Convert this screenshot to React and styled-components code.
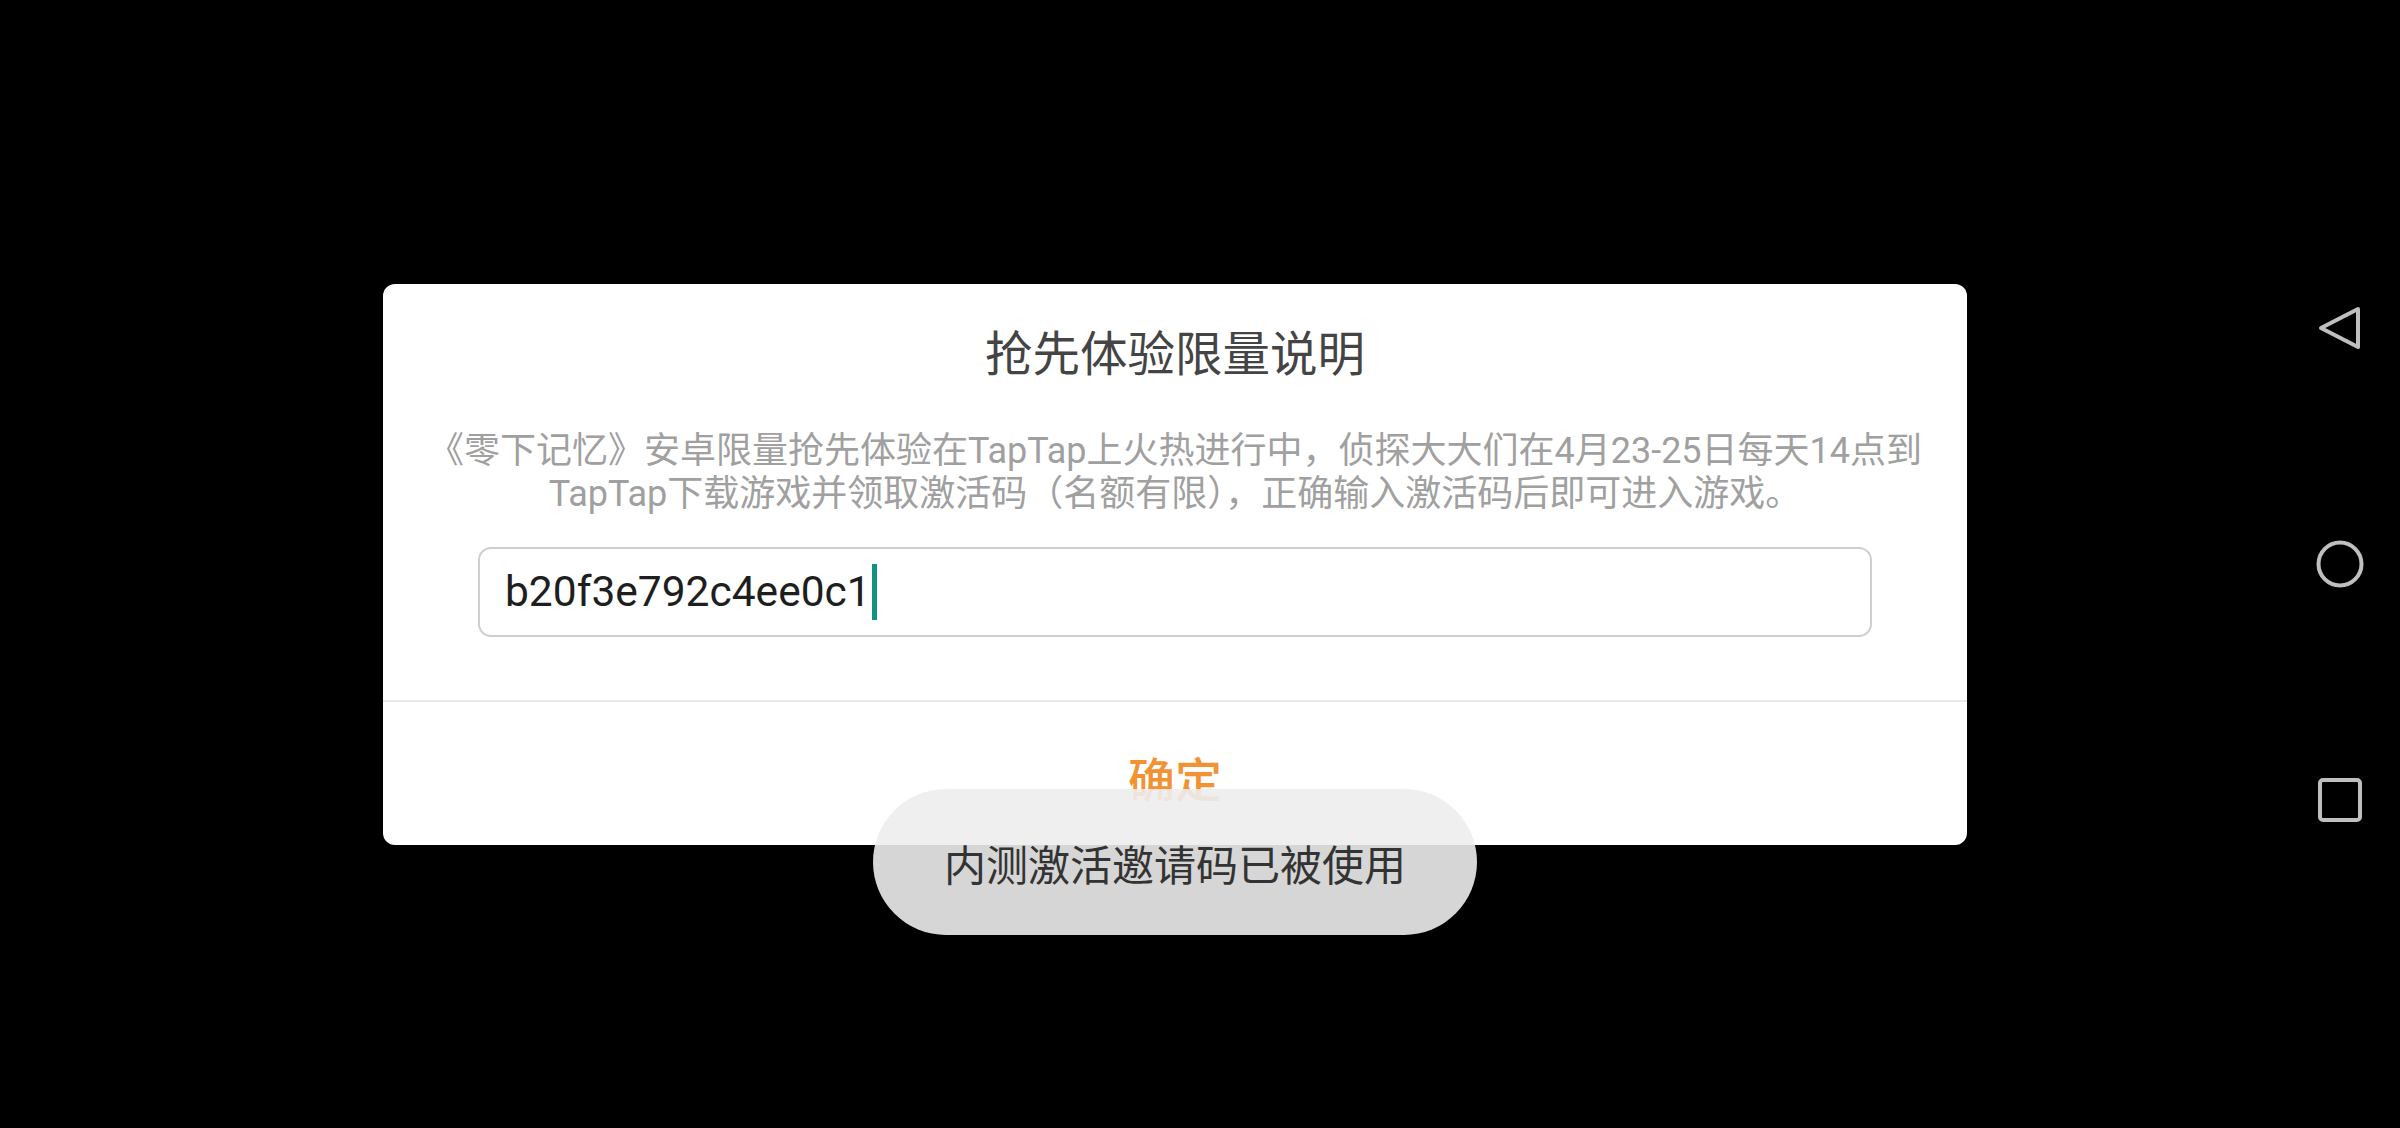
import React from 'react';
import styled, { createGlobalStyle } from 'styled-components';

const GlobalStyle = createGlobalStyle`
  html, body {
    margin: 0;
    padding: 0;
    background: #000;
  }
  body {
    font-family: Roboto, "Noto Sans CJK SC", sans-serif;
  }
`;

const Page = styled.div`
  display: flex;
  width: 2400px;
  height: 1128px;
  background: #000;
  overflow: hidden;
`;

// area left of the android nav bar
const Stage = styled.div`
  position: relative;
  flex: 1;
  display: flex;
  align-items: center;
  padding-left: 383px;
`;

const Dialog = styled.div`
  width: 1584px;
  background: #fff;
  border-radius: 12px;
  display: flex;
  flex-direction: column;
`;

const Body = styled.div`
  display: flex;
  flex-direction: column;
  align-items: center;
  padding: 41px 30px 63px;
`;

const Title = styled.h2`
  margin: 0;
  font-size: 47.5px;
  line-height: 61px;
  font-weight: 400;
  color: #444;
`;

const Description = styled.p`
  margin: 44px 0 0;
  font-size: 36px;
  line-height: 43px;
  color: #a0a0a0;
  text-align: center;
  white-space: nowrap;
`;

const Line = styled.span`
  display: block;
`;

const CodeField = styled.div`
  box-sizing: border-box;
  width: 1394px;
  height: 90px;
  margin-top: 31px;
  padding: 0 25px;
  border: 2px solid #cfcfcf;
  border-radius: 13px;
  display: flex;
  align-items: center;
  font-size: 42.5px;
  color: #1e1e1e;
`;

const Caret = styled.span`
  display: inline-block;
  width: 5px;
  height: 56px;
  margin-left: 1px;
  background: #14917f;
`;

const Footer = styled.div`
  height: 145px;
  border-top: 2px solid #e9e9e9;
  display: flex;
  align-items: center;
  justify-content: center;
  padding-top: 6px;
  box-sizing: border-box;
`;

const ConfirmButton = styled.button`
  border: none;
  background: none;
  padding: 0;
  font-family: Roboto, "Noto Sans CJK SC", sans-serif;
  font-size: 47px;
  font-weight: 500;
  color: #f39232;
  cursor: pointer;
`;

const Toast = styled.div`
  position: absolute;
  left: 873px;
  top: 789px;
  width: 604px;
  height: 146px;
  border-radius: 73px;
  background: rgba(237, 237, 237, 0.9);
  display: flex;
  align-items: center;
  justify-content: center;
  font-size: 42px;
  color: #333;
`;

const NavBar = styled.div`
  width: 120px;
  display: flex;
  flex-direction: column;
  align-items: center;
  justify-content: center;
  gap: 188px;
`;

const NavIcon = styled.svg`
  width: 48px;
  height: 48px;
  fill: none;
  stroke: #bfbfbf;
  stroke-width: 4;
  stroke-linejoin: round;
`;

const App = () => {
  return (
    <React.Fragment>
      <GlobalStyle />
      <Page>
        <Stage>
          <Dialog>
            <Body>
              <Title>抢先体验限量说明</Title>
              <Description>
                <Line>《零下记忆》安卓限量抢先体验在TapTap上火热进行中，侦探大大们在4月23-25日每天14点到</Line>
                <Line>TapTap下载游戏并领取激活码（名额有限），正确输入激活码后即可进入游戏。</Line>
              </Description>
              <CodeField>
                b20f3e792c4ee0c1
                <Caret />
              </CodeField>
            </Body>
            <Footer>
              <ConfirmButton>确定</ConfirmButton>
            </Footer>
          </Dialog>
          <Toast>内测激活邀请码已被使用</Toast>
        </Stage>
        <NavBar>
          <NavIcon viewBox="0 0 48 48">
            <path d="M42 5 L5 24 L42 43 Z" />
          </NavIcon>
          <NavIcon viewBox="0 0 48 48">
            <circle cx="24" cy="24" r="21.5" />
          </NavIcon>
          <NavIcon viewBox="0 0 48 48">
            <rect x="4" y="4" width="40" height="40" rx="3" />
          </NavIcon>
        </NavBar>
      </Page>
    </React.Fragment>
  );
};

export default App;
